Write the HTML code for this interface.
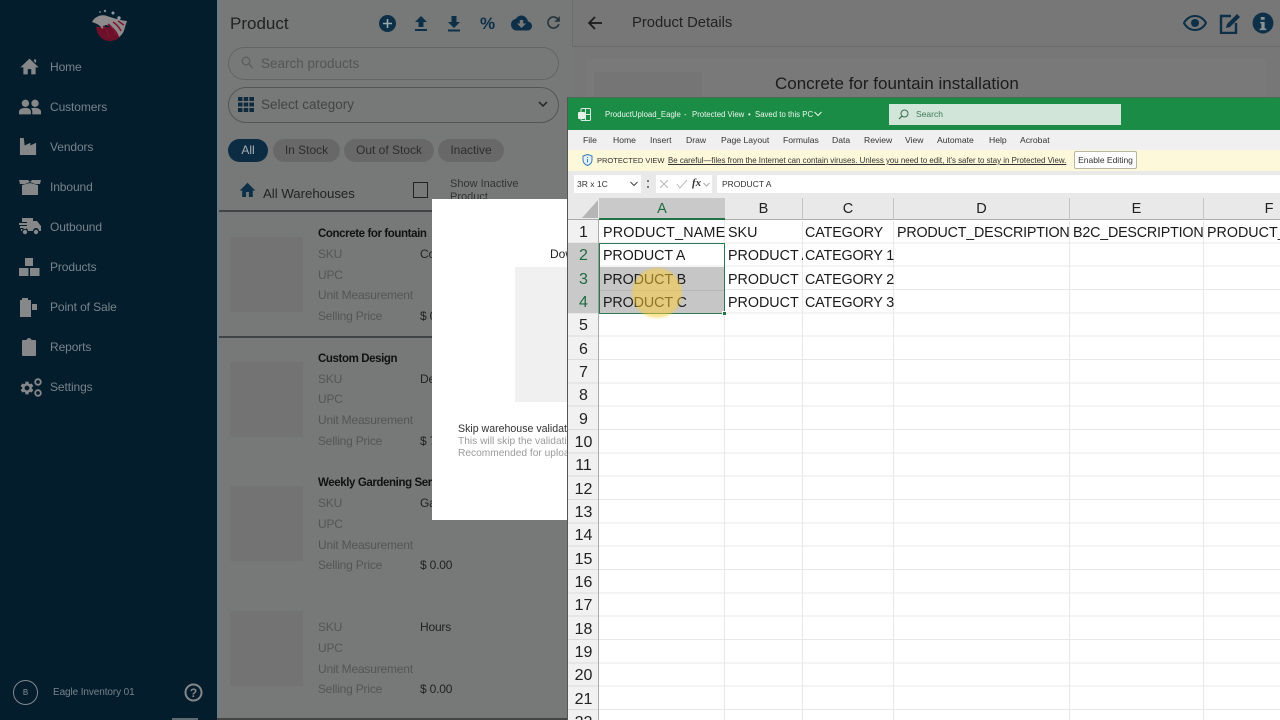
<!DOCTYPE html>
<html><head><meta charset="utf-8"><style>
*{box-sizing:border-box}
html,body{margin:0;padding:0;width:1280px;height:720px;overflow:hidden;background:#777;font-family:"Liberation Sans",sans-serif}
.a,.a>*{position:absolute;white-space:nowrap}
#side{left:0;top:0;width:217px;height:720px;background:#041d2c;filter:blur(.3px)}
#side .t{left:50px;font-size:12px;letter-spacing:-.1px;color:#77838b;line-height:16px}
#side svg{fill:#858789}
#mid{left:217px;top:0;width:355px;height:720px;background:#777878;border-left:2px solid #6c7c86;filter:blur(.35px)}
#mid .l{font-size:12px;letter-spacing:-.2px;color:#555;line-height:16px;left:99px}
#mid .v{font-size:12px;letter-spacing:-.2px;color:#222;line-height:16px;left:201px}
#mid .n{font-size:11.5px;letter-spacing:-.4px;font-weight:bold;color:#111;line-height:16px;left:99px}
#mid .ph{left:11px;width:73px;height:75px;background:#737373}
#mid .hr{left:0;width:353px;height:2px;background:#3f4447}
.chip{top:139px;height:23px;border-radius:12px;background:#686868;color:#2d2d2d;font-size:12px;line-height:23px;text-align:center}
#right{left:572px;top:0;width:708px;height:100px;background:#777;filter:blur(.35px)}
#modal{left:432px;top:199px;width:136px;height:321px;background:#fff;overflow:hidden}
#xl{left:567px;top:97px;width:713px;height:623px;background:#fff;overflow:hidden;border-left:1px solid #555;filter:blur(.25px)}
.tab{top:37px;font-size:8.6px;color:#333;line-height:12px}
.rn{left:0;width:31px;height:23.33px;text-align:center;font-size:16px;color:#222;line-height:23px}
.c{font-size:14.3px;color:#1a1a1a;line-height:23px;height:23px;overflow:hidden}
.ch{top:101px;height:22px;text-align:center;font-size:14.5px;color:#222;line-height:23px}
</style></head><body>

<div id="side" class="a">
<svg style="left:90px;top:7px" width="40" height="36" viewBox="0 0 40 36">
<path d="M6 20C7 29 13 34 20 34s13-5 14-14z" style="fill:#6d1029"/>
<path d="M2 15C5 9 12 7 17 9c6 2 12 4 20 5l-2 6c-1 5-3 8-6 10-1-4-4-8-7-10-2-1-5-2-7-2-1 2-2 3-3 4-1-3-4-5-10-7z" style="fill:#8f8a8c"/>
<path d="M13 19c3 2 5 6 6 11M18 17c3 2 6 6 8 11M23 15c3 2 6 5 8 9M28 14c2 1 4 3 6 4" stroke="#7c1530" stroke-width="1.500" style="fill:none"/>
<circle cx="10" cy="5" r="1" style="fill:#66727f"/><circle cx="15" cy="4" r="1.200" style="fill:#7f8b9b"/><circle cx="23" cy="6" r="1.500" style="fill:#8f9aa8"/><circle cx="29" cy="11" r="1.700" style="fill:#8f9aa8"/>
</svg>

<svg style="left:19px;top:56px" width="21" height="21" viewBox="0 0 24 24"><path d="M10 21v-6h4v6h5v-8h3.500L12 3 1.500 13H5v8z"/><path d="M17 4h2.500v4L17 6z"/></svg>
<div class="t" style="top:59px">Home</div>
<svg style="left:18px;top:96px" width="24" height="22" viewBox="0 0 24 24"><path d="M7 12a4 4 0 1 0 0-8 4 4 0 0 0 0 8zm10.500 0a4 4 0 1 0 0-8 4 4 0 0 0 0 8zM0 20v-3c0-2.500 3.500-4 7-4s6 1.500 6 4v3zm14.500 0v-3c0-1.500-.5-2.700-1.500-3.500 1.200-.4 3-.5 4.500-.5 3.300 0 6.500 1.500 6.500 4v3z"/></svg>
<div class="t" style="top:99px">Customers</div>
<svg style="left:19px;top:137px" width="19" height="19" viewBox="0 0 20 20"><path d="M1 1h4l1 8 6-3v3l6-3v13H1z"/></svg>
<div class="t" style="top:139px">Vendors</div>
<svg style="left:19px;top:177px" width="22" height="20" viewBox="0 0 22 20"><path d="M0 3h9l2 2 2-2h9l-1 4h-5l-5-2-5 2H1zM3 8l8-2 8 2v10H3z"/></svg>
<div class="t" style="top:179px">Inbound</div>
<svg style="left:19px;top:217px" width="23" height="20" viewBox="0 0 23 20"><path d="M3 1h11v3h4l4 5v5h-2a3 3 0 0 0-6 0H9a3 3 0 0 0-6 0H2v-2h6v-1H1V9h7V8H0V6h8V5H3z"/><circle cx="6" cy="15" r="2.200"/><circle cx="17" cy="15" r="2.200"/></svg>
<div class="t" style="top:219px">Outbound</div>
<svg style="left:19px;top:258px" width="21" height="19" viewBox="0 0 21 19"><path d="M6 0h8v8H6zM0 10h9.500v8H0zM11 10h9.500v8H11z"/></svg>
<div class="t" style="top:259px">Products</div>
<svg style="left:19px;top:297px" width="19" height="20" viewBox="0 0 19 20"><path d="M1 3h2V1h6v2h3v17H1zM13 7h5v6h-5z"/></svg>
<div class="t" style="top:299px">Point of Sale</div>
<svg style="left:22px;top:338px" width="14" height="18" viewBox="0 0 14 18"><path d="M1 2h3.500C5 .5 6 0 7 0s2 .5 2.500 2H13c.6 0 1 .4 1 1v14c0 .6-.4 1-1 1H1c-.6 0-1-.4-1-1V3c0-.6.4-1 1-1z"/></svg>
<div class="t" style="top:339px">Reports</div>
<svg style="left:19px;top:380px" width="16" height="16" viewBox="0 0 24 24"><path d="M19.140 12.940c.04-.3.06-.61.06-.94 0-.32-.02-.64-.07-.94l2.030-1.580c.18-.14.23-.41.12-.61l-1.920-3.320c-.12-.22-.37-.29-.59-.22l-2.390.96c-.5-.38-1.030-.7-1.620-.94l-.36-2.540c-.04-.24-.24-.41-.48-.41h-3.840c-.24 0-.43.17-.47.41l-.36 2.540c-.59.24-1.130.57-1.620.94l-2.390-.96c-.22-.08-.47 0-.59.22L2.740 8.870c-.12.21-.08.47.12.61l2.030 1.580c-.05.3-.09.63-.09.94s.02.64.07.94l-2.030 1.580c-.18.14-.23.41-.12.61l1.920 3.320c.12.22.37.29.59.22l2.390-.96c.5.38 1.030.7 1.620.94l.36 2.540c.05.24.24.41.48.41h3.840c.24 0 .44-.17.47-.41l.36-2.540c.59-.24 1.130-.56 1.620-.94l2.390.96c.22.08.47 0 .59-.22l1.920-3.320c.12-.22.07-.47-.12-.61l-2.010-1.580zM12 15.600c-1.980 0-3.600-1.620-3.600-3.600s1.620-3.600 3.600-3.600 3.600 1.620 3.600 3.600-1.620 3.600-3.600 3.600z"/></svg>
<svg style="left:34px;top:378px" width="8" height="8" viewBox="0 0 8 8"><circle cx="4" cy="4" r="2.800" style="fill:none" stroke="#858789" stroke-width="1.800"/></svg>
<svg style="left:34px;top:389px" width="8" height="8" viewBox="0 0 8 8"><circle cx="4" cy="4" r="2.800" style="fill:none" stroke="#858789" stroke-width="1.800"/></svg>
<div class="t" style="top:379px">Settings</div>

<div style="left:13px;top:680px;width:25px;height:25px;border:1px solid #7f8a91;border-radius:50%;color:#8a9298;font-size:8px;line-height:23px;text-align:center">B</div>
<div class="t" style="left:53px;top:685px;font-size:10px">Eagle Inventory 01</div>
<svg style="left:184px;top:683px" width="19" height="19" viewBox="0 0 19 19"><circle cx="9.500" cy="9.500" r="8" stroke="#858789" stroke-width="2" style="fill:none"/><text x="9.500" y="14" text-anchor="middle" font-size="12" font-weight="bold" font-family="Liberation Sans" style="fill:#858789">?</text></svg>
<div style="left:172px;top:718px;width:26px;height:2px;background:#5e6a72"></div>
</div>

<div id="mid" class="a">
<div style="left:11px;top:13px;font-size:17px;color:#222;line-height:22px">Product</div>
<svg style="left:160px;top:15px" width="17" height="17" viewBox="0 0 17 17"><circle cx="8.500" cy="8.500" r="8.500" fill="#0d3048"/><path d="M8.500 4v9M4 8.500h9" stroke="#9aa" stroke-width="1.600"/></svg>
<svg style="left:195px;top:15px" width="14" height="17" viewBox="0 0 14 17"><path d="M7 1l6 6H9.500v5h-5V7H1zM1 14h12v2H1z" fill="#0d3048"/></svg>
<svg style="left:228px;top:15px" width="14" height="17" viewBox="0 0 14 17"><path d="M4.500 1h5v6H13l-6 6-6-6h3.500zM1 14.500h12v2H1z" fill="#0d3048"/></svg>
<div style="left:261px;top:13px;font-size:17px;line-height:22px;color:#0d3048;font-weight:bold">%</div>
<svg style="left:292px;top:15px" width="21" height="16" viewBox="0 0 21 16"><path d="M17 6.500C16.400 3 13.600 0.500 10.500 0.500 8 .5 5.800 2 4.600 4 2 4.400 0 6.600 0 9.500 0 12.800 2.500 15.500 5.500 15.500h11c2.500 0 4.500-2 4.500-4.500 0-2.400-1.800-4.300-4-4.500zM10.500 13l-4.500-4.500h2.800V5h3.400v3.500H15z" fill="#0d3048"/></svg>
<svg style="left:325px;top:13px" width="19" height="19" viewBox="0 0 24 24"><path d="M17.650 6.350A7.960 7.960 0 0 0 12 4a8 8 0 1 0 7.730 10h-2.080A6 6 0 1 1 12 6c1.660 0 3.140.69 4.220 1.780L13 11h7V4z" fill="#26343c"/></svg>

<div style="left:9px;top:47px;width:331px;height:33px;border:1px solid #646464;border-radius:17px"></div>
<svg style="left:22px;top:56px" width="12" height="13" viewBox="0 0 12 13"><circle cx="5" cy="5" r="3.800" fill="none" stroke="#5d5d5d" stroke-width="1.300"/><path d="M8 8l3.500 4" stroke="#5d5d5d" stroke-width="1.400"/></svg>
<div style="left:42px;top:55px;font-size:13.500px;color:#555;line-height:17px">Search products</div>
<div style="left:9px;top:87px;width:331px;height:36px;border:1px solid #555;border-radius:18px"></div>
<svg style="left:19px;top:97px" width="16" height="15" viewBox="0 0 16 15"><path d="M0 0h4.500v4H0zM5.700 0h4.500v4H5.700zM11.400 0H16v4h-4.600zM0 5.500h4.500v4H0zM5.700 5.500h4.500v4H5.700zM11.400 5.500H16v4h-4.600zM0 11h4.500v4H0zM5.700 11h4.500v4H5.700zM11.400 11H16v4h-4.600z" fill="#0d2a3f"/></svg>
<div style="left:42px;top:96px;font-size:13.500px;color:#444;line-height:17px">Select category</div>
<svg style="left:319px;top:101px" width="10" height="7" viewBox="0 0 10 7"><path d="M1 1l4 4 4-4" fill="none" stroke="#222" stroke-width="1.500"/></svg>

<div class="chip" style="left:9px;width:40px;background:#0c2c44;color:#a9b0b5">All</div>
<div class="chip" style="left:54px;width:67px">In Stock</div>
<div class="chip" style="left:125px;width:90px">Out of Stock</div>
<div class="chip" style="left:219px;width:66px">Inactive</div>

<svg style="left:20px;top:182px" width="17" height="15" viewBox="0 0 24 21"><path d="M10 21v-7h4v7h5.500v-9H23L12 1 1 12h3.500v9z" fill="#0d3048"/></svg>
<div style="left:44px;top:185px;font-size:13.200px;color:#222;line-height:17px">All Warehouses</div>
<div style="left:194px;top:182px;width:15px;height:16px;border:1.500px solid #222"></div>
<div style="left:231px;top:178px;font-size:11px;color:#333;line-height:13px;white-space:normal;width:90px">Show Inactive Product</div>

<div class="hr" style="top:210px"></div>
<div class="ph" style="top:237px"></div>
<div class="n" style="top:226px">Concrete for fountain</div>
<div class="l" style="top:246px">SKU</div><div class="v" style="top:246px">Co</div>
<div class="l" style="top:267px">UPC</div>
<div class="l" style="top:287px">Unit Measurement</div>
<div class="l" style="top:308px">Selling Price</div><div class="v" style="top:308px">$ 0</div>
<div class="hr" style="top:336px"></div>

<div class="ph" style="top:362px"></div>
<div class="n" style="top:351px">Custom Design</div>
<div class="l" style="top:371px">SKU</div><div class="v" style="top:371px">De</div>
<div class="l" style="top:391px">UPC</div>
<div class="l" style="top:412px">Unit Measurement</div>
<div class="l" style="top:433px">Selling Price</div><div class="v" style="top:433px">$ 7</div>

<div class="ph" style="top:486px"></div>
<div class="n" style="top:475px">Weekly Gardening Services</div>
<div class="l" style="top:495px">SKU</div><div class="v" style="top:495px">Ga</div>
<div class="l" style="top:516px">UPC</div>
<div class="l" style="top:537px">Unit Measurement</div>
<div class="l" style="top:557px">Selling Price</div><div class="v" style="top:557px">$ 0.00</div>

<div class="ph" style="top:611px"></div>
<div class="l" style="top:619px">SKU</div><div class="v" style="top:619px">Hours</div>
<div class="l" style="top:640px">UPC</div>
<div class="l" style="top:661px">Unit Measurement</div>
<div class="l" style="top:681px">Selling Price</div><div class="v" style="top:681px">$ 0.00</div>
<div style="left:-2px;top:718px;width:355px;height:2px;background:#444"></div>
</div>

<div id="right" class="a">
<div style="left:0;top:0;width:1px;height:46px;background:#6e6e6e"></div>
<div style="left:0;top:46px;width:708px;height:1px;background:#6a6a6a"></div>
<svg style="left:15px;top:15px" width="16" height="16" viewBox="0 0 16 16"><path d="M15 8H2M8 2L2 8l6 6" fill="none" stroke="#1a1a1a" stroke-width="1.700"/></svg>
<div style="left:60px;top:14px;font-size:14.800px;color:#222;line-height:18px">Product Details</div>
<div style="left:14px;top:59px;width:680px;height:41px;background:#797979"></div>
<div style="left:22px;top:72px;width:108px;height:28px;background:#757575"></div>
<div style="left:203px;top:74px;font-size:17px;color:#1c1c1c;line-height:20px">Concrete for fountain installation</div>
<svg style="left:611px;top:14px" width="24" height="18" viewBox="0 0 24 18"><path d="M12 2C7 2 3 5 1 9c2 4 6 7 11 7s9-3 11-7c-2-4-6-7-11-7z" fill="none" stroke="#0d3048" stroke-width="2"/><circle cx="12" cy="9" r="4" fill="#0d3048"/></svg>
<svg style="left:647px;top:13px" width="23" height="21" viewBox="0 0 23 21"><path d="M12 3H2v17h15V10" fill="none" stroke="#0d3048" stroke-width="2.400"/><path d="M7 15l1-4L18 1l3 3-10 10z" fill="#0d3048"/></svg>
<svg style="left:680px;top:12px" width="22" height="22" viewBox="0 0 20 20"><circle cx="10" cy="10" r="9.500" fill="#0d3048"/><path d="M8 4.500h3.500V7H8zM7.500 9h4v6h1.500v1.500H7V15h1.500v-4.500h-1z" fill="#8a9298"/></svg>
</div>

<div id="modal" class="a">
<div style="left:118px;top:47px;font-size:12px;color:#222;line-height:16px">Dow</div>
<div style="left:83px;top:68px;width:60px;height:135px;background:#f0f0f0"></div>
<div style="left:26px;top:222px;font-size:10.600px;color:#333;line-height:16px">Skip warehouse validation</div>
<div style="left:26px;top:236px;font-size:10.200px;color:#9a9a9a;line-height:13px">This will skip the validation</div>
<div style="left:26px;top:248px;font-size:10.200px;color:#9a9a9a;line-height:13px">Recommended for uploads</div>
</div>

<div id="xl" class="a">
<!-- title bar -->
<div style="left:0;top:0;width:713px;height:33px;background:#1b8c46;border-top:1px solid #4b6a58"></div>
<svg style="left:10px;top:11px" width="13" height="13" viewBox="0 0 13 13"><rect x="3" y=".5" width="9.500" height="12" rx="1" fill="none" stroke="#d9ebe0"/><path d="M7.500 1v11M3 6.500h9" stroke="#d9ebe0"/><rect x="0" y="4" width="7" height="7" rx="1" fill="#e4f2ea"/></svg>
<div style="left:37px;top:12px;font-size:7.800px;color:#eaf5ee;line-height:12px">ProductUpload_Eagle</div>
<div style="left:116px;top:12px;font-size:7.800px;color:#eaf5ee;line-height:12px">-</div>
<div style="left:124px;top:12px;font-size:7.800px;color:#eaf5ee;line-height:12px">Protected View</div>
<div style="left:180px;top:12px;font-size:7.800px;color:#eaf5ee;line-height:12px">•</div>
<div style="left:187px;top:12px;font-size:7.800px;color:#eaf5ee;line-height:12px">Saved to this PC</div>
<svg style="left:246px;top:14px" width="8" height="6" viewBox="0 0 8 6"><path d="M.5 1L4 4.500 7.500 1" fill="none" stroke="#eaf5ee"/></svg>
<div style="left:321px;top:7px;width:232px;height:21px;background:#d1e5d9"></div>
<svg style="left:330px;top:12px" width="11" height="11" viewBox="0 0 11 11"><circle cx="6.500" cy="4.500" r="3.500" fill="none" stroke="#3f6d52"/><path d="M4 7L1 10" stroke="#3f6d52" stroke-width="1.200"/></svg>
<div style="left:348px;top:11px;font-size:8.500px;color:#3f7a57;line-height:12px">Search</div>
<!-- tabs -->
<div style="left:0;top:33px;width:713px;height:21px;background:#f0f0f0"></div>
<div class="tab" style="left:15px">File</div><div class="tab" style="left:45px">Home</div><div class="tab" style="left:82px">Insert</div><div class="tab" style="left:118px">Draw</div><div class="tab" style="left:153px">Page Layout</div><div class="tab" style="left:215px">Formulas</div><div class="tab" style="left:264px">Data</div><div class="tab" style="left:296px">Review</div><div class="tab" style="left:337px">View</div><div class="tab" style="left:369px">Automate</div><div class="tab" style="left:421px">Help</div><div class="tab" style="left:452px">Acrobat</div>
<!-- protected -->
<div style="left:0;top:53px;width:713px;height:21px;background:#fdf8d9"></div>
<svg style="left:14px;top:57px" width="11" height="12" viewBox="0 0 11 12"><path d="M5.500.5l4.500 1.500v4c0 2.500-2 4.500-4.500 5.500C3 10.500 1 8.500 1 6V2z" fill="#e6f0f8" stroke="#3a7cb5"/><path d="M5.500 3v1M5.500 5v3.500" stroke="#3a7cb5"/></svg>
<div style="left:29px;top:58px;font-size:7.500px;color:#333;line-height:12px">PROTECTED VIEW</div>
<div style="left:100px;top:58px;font-size:7.900px;color:#333;line-height:12px;text-decoration:underline">Be careful—files from the Internet can contain viruses. Unless you need to edit, it's safer to stay in Protected View.</div>
<div style="left:506px;top:54px;width:63px;height:18px;background:#fff;border:1px solid #b5b5a5;border-radius:2px;font-size:8.500px;color:#333;line-height:16px;text-align:center">Enable Editing</div>
<!-- formula -->
<div style="left:0;top:74px;width:713px;height:27px;background:#e9e9e9"></div>
<div style="left:6px;top:78px;width:67px;height:18px;background:#fff;font-size:8.500px;color:#333;line-height:18px;padding-left:3px">3R x 1C</div>
<svg style="left:62px;top:84px" width="8" height="6" viewBox="0 0 8 6"><path d="M.5 1L4 4.500 7.500 1" fill="none" stroke="#444"/></svg>
<div style="left:79px;top:83px;width:2px;height:8px;border-top:2px dotted #777;border-bottom:2px dotted #777"></div>
<div style="left:88px;top:78px;width:56px;height:18px;background:#fff"></div>
<svg style="left:91px;top:82px" width="30" height="10" viewBox="0 0 30 10"><path d="M1 1l8 8M9 1L1 9" stroke="#bbb"/><path d="M18 5l3 4 7-8" fill="none" stroke="#bbb"/></svg>
<div style="left:124px;top:79px;font-size:11px;font-style:italic;font-family:'Liberation Serif',serif;color:#333;line-height:15px;font-weight:bold">fx</div>
<svg style="left:135px;top:85px" width="7" height="5" viewBox="0 0 7 5"><path d="M.5 1L3.500 4 6.500 1" fill="none" stroke="#aaa"/></svg>
<div style="left:149px;top:78px;width:564px;height:18px;background:#fff;font-size:8.500px;color:#333;line-height:18px;padding-left:5px">PRODUCT A</div>
<!-- col headers -->
<div style="left:0;top:101px;width:713px;height:22px;background:#e9e9e9;border-bottom:1px solid #aaa"></div>
<svg style="left:14px;top:103px" width="16" height="18" viewBox="0 0 16 18"><path d="M16 0v18H0z" fill="#b5b5b5"/></svg>
<div class="ch" style="left:31px;width:126px;background:#c9c9c9;color:#1e6b40;border-bottom:2px solid #217346">A</div>
<div class="ch" style="left:157px;width:78px;border-right:1px solid #c4c4c4">B</div>
<div class="ch" style="left:235px;width:91px;border-right:1px solid #c4c4c4">C</div>
<div class="ch" style="left:326px;width:176px;border-right:1px solid #c4c4c4">D</div>
<div class="ch" style="left:502px;width:134px;border-right:1px solid #c4c4c4">E</div>
<div class="ch" style="left:636px;width:130px">F</div>
<!-- row header bg -->
<div style="left:0;top:123px;width:31px;height:500px;background:repeating-linear-gradient(#f1f1f1 0,#f1f1f1 22.33px,#dcdcdc 22.33px,#dcdcdc 23.33px);border-right:1px solid #aaa"></div>
<div style="left:0;top:146.330px;width:31px;height:70px;background:#c9c9c9;border-right:1px solid #999"></div>
<!-- grid -->
<div style="left:31px;top:123px;width:682px;height:500px;background:repeating-linear-gradient(transparent 0,transparent 22.33px,#e8e8e8 22.33px,#e8e8e8 23.33px)"></div>
<div style="left:156px;top:123px;width:1px;height:500px;background:#e8e8e8"></div>
<div style="left:234px;top:123px;width:1px;height:500px;background:#e8e8e8"></div>
<div style="left:325px;top:123px;width:1px;height:500px;background:#e8e8e8"></div>
<div style="left:501px;top:123px;width:1px;height:500px;background:#e8e8e8"></div>
<div style="left:635px;top:123px;width:1px;height:500px;background:#e8e8e8"></div>
<!-- selection -->
<div style="left:31px;top:169.700px;width:126px;height:46.700px;background:#c6c6c6"></div>
<div style="left:31px;top:192.500px;width:126px;height:1px;background:#b6b6b6"></div>
<div style="left:31px;top:146px;width:126px;height:71px;border:1px solid #2a7a4f"></div>
<div style="left:154px;top:214px;width:5px;height:5px;background:#217346;border:1px solid #fff"></div>
<!-- row numbers -->
<div class="rn" style="top:124px">1</div><div class="rn" style="top:147.300px;color:#1e6b40">2</div><div class="rn" style="top:170.700px;color:#1e6b40">3</div><div class="rn" style="top:194px;color:#1e6b40">4</div><div class="rn" style="top:217.300px">5</div><div class="rn" style="top:240.700px">6</div><div class="rn" style="top:264px">7</div><div class="rn" style="top:287.300px">8</div><div class="rn" style="top:310.700px">9</div><div class="rn" style="top:334px">10</div><div class="rn" style="top:357.300px">11</div><div class="rn" style="top:380.700px">12</div><div class="rn" style="top:404px">13</div><div class="rn" style="top:427.300px">14</div><div class="rn" style="top:450.700px">15</div><div class="rn" style="top:474px">16</div><div class="rn" style="top:497.300px">17</div><div class="rn" style="top:520.700px">18</div><div class="rn" style="top:544px">19</div><div class="rn" style="top:567.300px">20</div><div class="rn" style="top:590.700px">21</div><div class="rn" style="top:614px">22</div>
<!-- cells -->
<div class="c" style="left:35px;top:125px;width:122px;letter-spacing:.2px">PRODUCT_NAME</div>
<div class="c" style="left:160px;top:125px">SKU</div>
<div class="c" style="left:237px;top:125px;letter-spacing:-.1px">CATEGORY</div>
<div class="c" style="left:329px;top:125px;width:173px;letter-spacing:-.2px">PRODUCT_DESCRIPTION</div>
<div class="c" style="left:505px;top:125px;width:131px;letter-spacing:-.2px">B2C_DESCRIPTION</div>
<div class="c" style="left:639px;top:125px;width:80px">PRODUCT_</div>
<div class="c" style="left:35px;top:148.300px;letter-spacing:-.1px">PRODUCT A</div>
<div class="c" style="left:35px;top:171.700px;letter-spacing:-.1px">PRODUCT B</div>
<div class="c" style="left:35px;top:195px;letter-spacing:-.1px">PRODUCT C</div>
<div class="c" style="left:160px;top:148.300px;width:75px">PRODUCT A</div>
<div class="c" style="left:160px;top:171.700px;width:75px">PRODUCT B</div>
<div class="c" style="left:160px;top:195px;width:75px">PRODUCT C</div>
<div class="c" style="left:237px;top:148.300px;letter-spacing:-.15px">CATEGORY 1</div>
<div class="c" style="left:237px;top:171.700px;letter-spacing:-.15px">CATEGORY 2</div>
<div class="c" style="left:237px;top:195px;letter-spacing:-.15px">CATEGORY 3</div>
<!-- cursor -->
<div style="left:64px;top:171px;width:50px;height:50px;border-radius:50%;background:rgba(255,205,50,.5);filter:blur(1px)"></div>
</div>
</body></html>
